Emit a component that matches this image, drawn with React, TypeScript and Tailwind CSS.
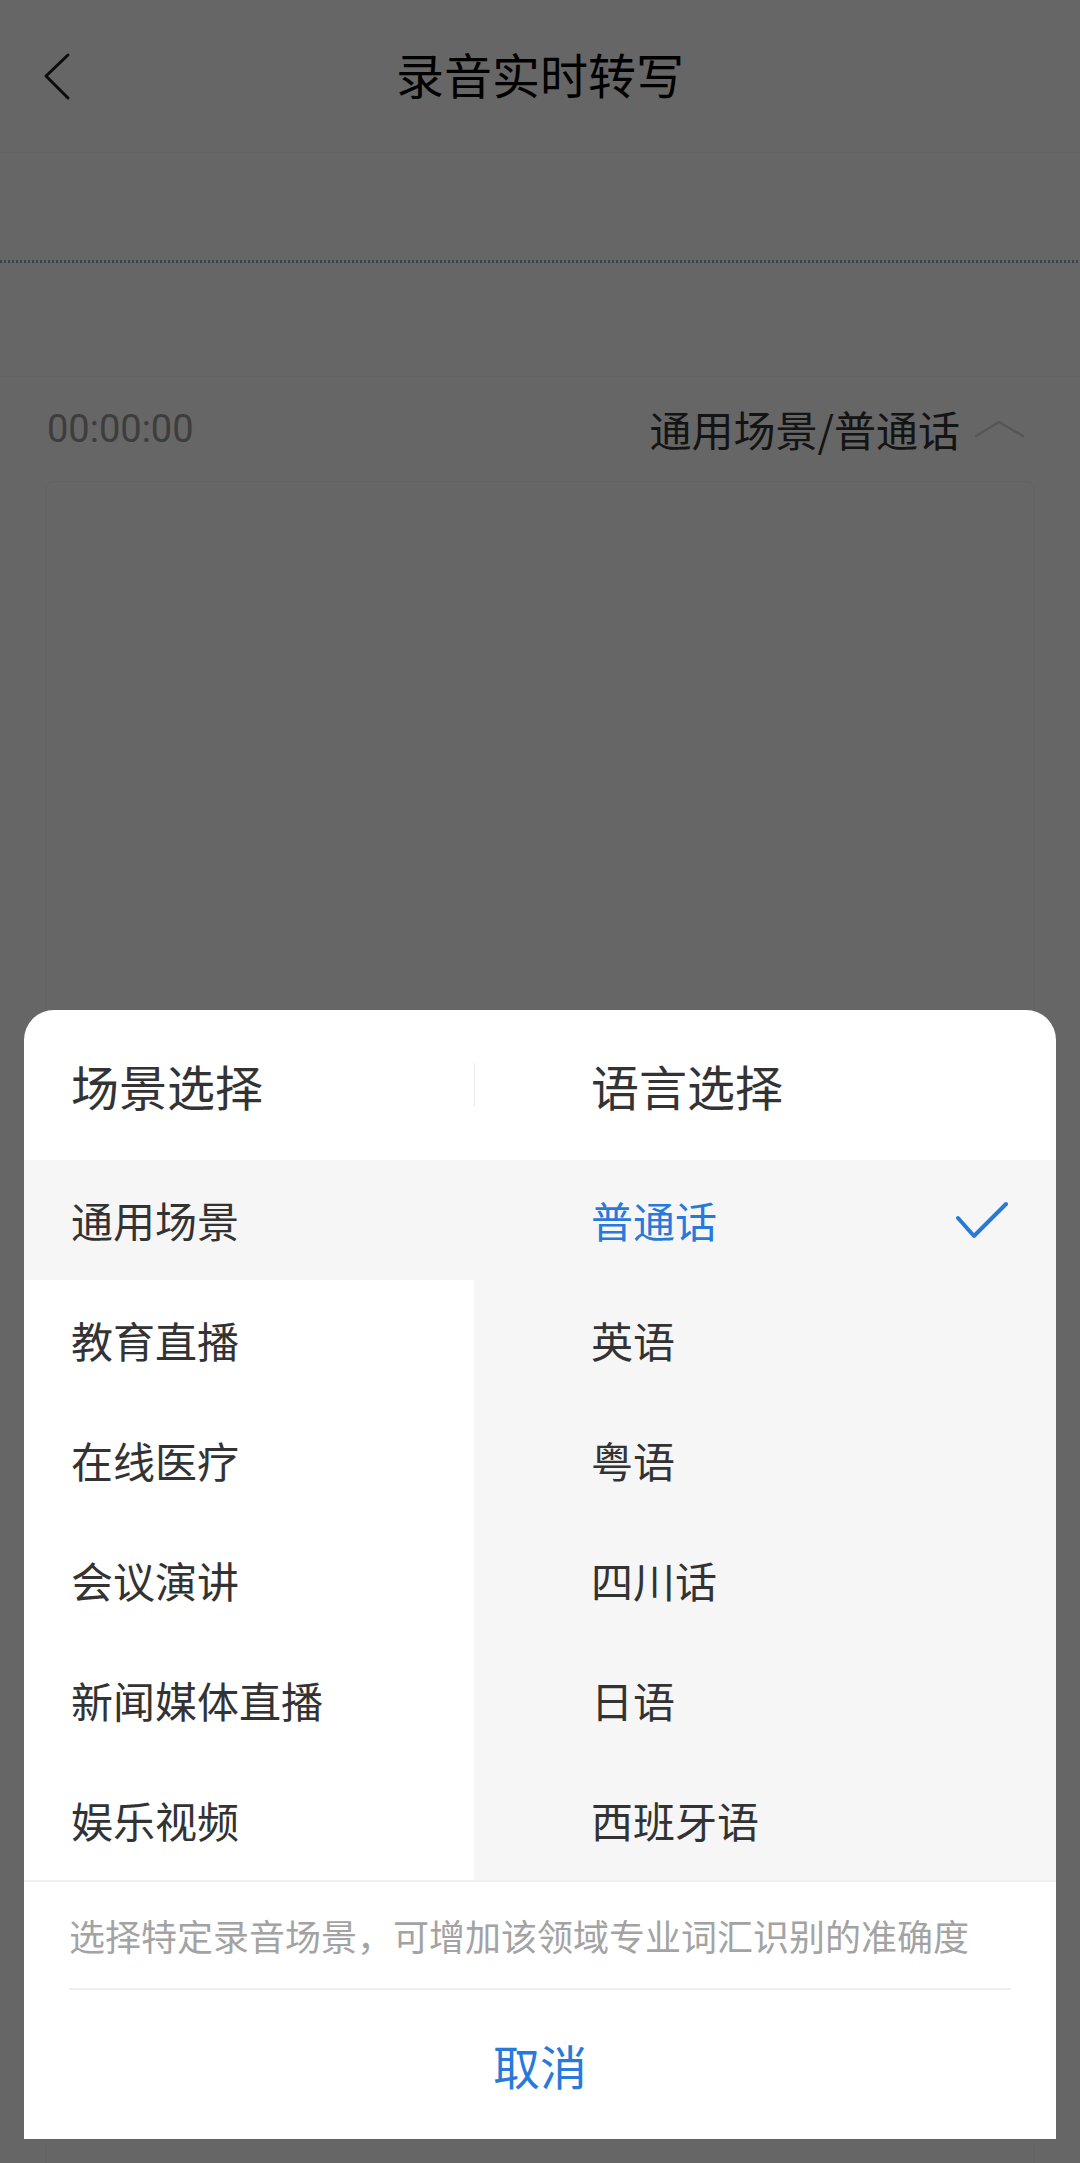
import React from 'react';

const scenes = ['通用场景', '教育直播', '在线医疗', '会议演讲', '新闻媒体直播', '娱乐视频'];
const languages = ['普通话', '英语', '粤语', '四川话', '日语', '西班牙语'];

function BackIcon() {
  return (
    <svg width="30" height="50" viewBox="0 0 30 50" fill="none" stroke="#1c1c1c" strokeWidth="3" strokeLinecap="round" strokeLinejoin="round">
      <path d="M26 3 4 24l22 22" />
    </svg>
  );
}

function ChevronUp() {
  return (
    <svg width="52" height="20" viewBox="0 0 52 20" fill="none" stroke="#d8d8d8" strokeWidth="2.5" strokeLinecap="round" strokeLinejoin="round">
      <path d="M2 17 25 3l24 14" />
    </svg>
  );
}

function CheckIcon() {
  return (
    <svg width="52" height="40" viewBox="0 0 52 40" fill="none" stroke="#2979db" strokeWidth="4" strokeLinecap="round" strokeLinejoin="round">
      <path d="M2 18 18 36 50 4" />
    </svg>
  );
}

export default function App() {
  const [scene, setScene] = React.useState(0);
  const [language, setLanguage] = React.useState(0);

  return (
    <div className="relative h-[2163px] w-[1080px] overflow-hidden bg-white font-['Noto_Sans_CJK_SC',sans-serif]">
      {/* page under the sheet */}
      <header className="grid h-[153px] grid-cols-[1fr_auto_1fr] items-center border-b border-[#f5f5f5]">
        <div className="pl-[42px] pt-[1px]">
          <BackIcon />
        </div>
        <h1 className="pb-[6px] text-[48px] leading-none text-black">录音实时转写</h1>
        <div />
      </header>

      <div className="h-[107px]" />
      <div className="h-[3px] bg-[repeating-linear-gradient(90deg,#8fa9cf_0_2px,transparent_2px_4px)]" />
      <div className="h-[114px] border-b border-[#f5f6f8]" />

      <div className="flex h-[104px] items-center justify-between pl-[47px] pr-[54px]">
        <span className="font-['Roboto',sans-serif] text-[38px] leading-none text-[#999]">00:00:00</span>
        <div className="flex items-center gap-[14px]">
          <span className="text-[42px] leading-none text-[#333]">通用场景/普通话</span>
          <ChevronUp />
        </div>
      </div>

      <div className="mx-[45px] h-[1700px] rounded-[8px] border border-[#f4f4f4]" />

      {/* dim overlay */}
      <div className="absolute inset-0 bg-black/60" />

      {/* bottom sheet */}
      <div className="absolute bottom-[24px] left-[24px] right-[24px] overflow-hidden rounded-t-[30px] bg-white">
        <div className="flex h-[150px] items-center">
          <div className="flex w-[450px] items-center pl-[47px]">
            <span className="text-[48px] leading-none text-[#333]">场景选择</span>
          </div>
          <div className="h-[44px] w-px bg-[#ececec]" />
          <div className="flex flex-1 items-center pl-[116px]">
            <span className="text-[48px] leading-none text-[#333]">语言选择</span>
          </div>
        </div>

        <div className="flex">
          <div className="w-[450px]">
            {scenes.map((name, i) => (
              <div
                key={name}
                onClick={() => setScene(i)}
                className={
                  'flex h-[120px] items-center pl-[47px] text-[42px] leading-none text-[#333] ' +
                  (i === scene ? 'bg-[#f6f6f6]' : 'bg-white')
                }
              >
                {name}
              </div>
            ))}
          </div>
          <div className="flex-1 bg-[#f6f6f6]">
            {languages.map((name, i) => (
              <div
                key={name}
                onClick={() => setLanguage(i)}
                className="flex h-[120px] items-center justify-between pl-[117px] pr-[48px]"
              >
                <span className={'text-[42px] leading-none ' + (i === language ? 'text-[#2979db]' : 'text-[#333]')}>
                  {name}
                </span>
                {i === language && <CheckIcon />}
              </div>
            ))}
          </div>
        </div>

        <div className="h-[2px] bg-[#efefef]" />
        <div className="flex h-[106px] items-center px-[45px]">
          <p className="text-[36px] leading-none text-[#a3a3a3]">选择特定录音场景，可增加该领域专业词汇识别的准确度</p>
        </div>
        <div className="mx-[45px] h-[2px] bg-[#f0f0f0]" />
        <button className="flex h-[149px] w-full items-center justify-center text-[47px] leading-none text-[#2979db]">
          取消
        </button>
      </div>
    </div>
  );
}
